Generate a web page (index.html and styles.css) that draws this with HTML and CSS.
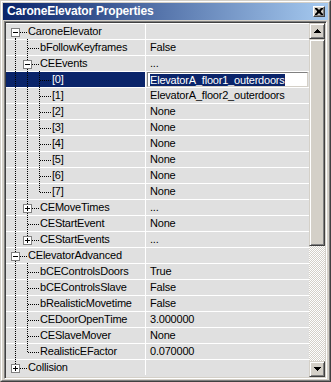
FILE: index.html
```html
<!DOCTYPE html>
<html>
<head>
<meta charset="utf-8">
<link rel="stylesheet" href="styles.css">
</head>
<body>
<div class="window">
  <div class="frame">
    <div class="titlebar">
      <span class="title">CaroneElevator Properties</span>
      <span class="close"><svg width="8" height="7" viewBox="0 0 8 7"><path d="M0 0h2l2 2 2-2h2v1l-2 2v1l2 2v1h-2l-2-2-2 2h-2v-1l2-2v-1l-2-2z" fill="#000"/></svg></span>
    </div>
    <div class="list">
      <div class="rows">
        <div class="row"><div class="name"><span class="g own first"><i class="box minus"></i></span><span class="label">CaroneElevator</span></div><div class="value"></div></div>
        <div class="row"><div class="name"><span class="g pipe"></span><span class="g own tee"></span><span class="label">bFollowKeyframes</span></div><div class="value">False</div></div>
        <div class="row"><div class="name"><span class="g pipe"></span><span class="g own tee"><i class="box minus"></i></span><span class="label">CEEvents</span></div><div class="value">...</div></div>
        <div class="row sel"><div class="name"><span class="g pipe"></span><span class="g pipe"></span><span class="g own tee"></span><span class="label">[0]</span></div><div class="value"><span class="edit"><span class="hl">ElevatorA_floor1_outerdoors</span></span></div></div>
        <div class="row"><div class="name"><span class="g pipe"></span><span class="g pipe"></span><span class="g own tee"></span><span class="label">[1]</span></div><div class="value">ElevatorA_floor2_outerdoors</div></div>
        <div class="row"><div class="name"><span class="g pipe"></span><span class="g pipe"></span><span class="g own tee"></span><span class="label">[2]</span></div><div class="value">None</div></div>
        <div class="row"><div class="name"><span class="g pipe"></span><span class="g pipe"></span><span class="g own tee"></span><span class="label">[3]</span></div><div class="value">None</div></div>
        <div class="row"><div class="name"><span class="g pipe"></span><span class="g pipe"></span><span class="g own tee"></span><span class="label">[4]</span></div><div class="value">None</div></div>
        <div class="row"><div class="name"><span class="g pipe"></span><span class="g pipe"></span><span class="g own tee"></span><span class="label">[5]</span></div><div class="value">None</div></div>
        <div class="row"><div class="name"><span class="g pipe"></span><span class="g pipe"></span><span class="g own tee"></span><span class="label">[6]</span></div><div class="value">None</div></div>
        <div class="row"><div class="name"><span class="g pipe"></span><span class="g pipe"></span><span class="g own elbow"></span><span class="label">[7]</span></div><div class="value">None</div></div>
        <div class="row"><div class="name"><span class="g pipe"></span><span class="g own tee"><i class="box plus"></i></span><span class="label">CEMoveTimes</span></div><div class="value">...</div></div>
        <div class="row"><div class="name"><span class="g pipe"></span><span class="g own tee"></span><span class="label">CEStartEvent</span></div><div class="value">None</div></div>
        <div class="row"><div class="name"><span class="g pipe"></span><span class="g own elbow"><i class="box plus"></i></span><span class="label">CEStartEvents</span></div><div class="value">...</div></div>
        <div class="row"><div class="name"><span class="g own tee"><i class="box minus"></i></span><span class="label">CElevatorAdvanced</span></div><div class="value"></div></div>
        <div class="row"><div class="name"><span class="g pipe"></span><span class="g own tee"></span><span class="label">bCEControlsDoors</span></div><div class="value">True</div></div>
        <div class="row"><div class="name"><span class="g pipe"></span><span class="g own tee"></span><span class="label">bCEControlsSlave</span></div><div class="value">False</div></div>
        <div class="row"><div class="name"><span class="g pipe"></span><span class="g own tee"></span><span class="label">bRealisticMovetime</span></div><div class="value">False</div></div>
        <div class="row"><div class="name"><span class="g pipe"></span><span class="g own tee"></span><span class="label">CEDoorOpenTime</span></div><div class="value">3.000000</div></div>
        <div class="row"><div class="name"><span class="g pipe"></span><span class="g own tee"></span><span class="label">CESlaveMover</span></div><div class="value">None</div></div>
        <div class="row"><div class="name"><span class="g pipe"></span><span class="g own elbow"></span><span class="label">RealisticEFactor</span></div><div class="value">0.070000</div></div>
        <div class="row"><div class="name"><span class="g own elbow"><i class="box plus"></i></span><span class="label">Collision</span></div><div class="value"></div></div>
      </div>
      <div class="scrollbar">
        <div class="sbtn"><svg width="7" height="4" viewBox="0 0 7 4"><path d="M3 0h1v1h1v1h1v1h1v1H0V3h1V2h1V1h1z" fill="#000"/></svg></div>
        <div class="thumb"></div>
        <div class="track"></div>
        <div class="sbtn"><svg width="7" height="4" viewBox="0 0 7 4"><path d="M0 0h7v1H6v1H5v1H4v1H3V3H2V2H1V1H0z" fill="#000"/></svg></div>
      </div>
    </div>
  </div>
</div>
</body>
</html>
```

FILE: styles.css
```css
html, body {
  margin: 0;
  padding: 0;
  background: #d4d0c8;
}

.window {
  width: 331px;
  height: 382px;
  box-sizing: border-box;
  border: 1px solid;
  border-color: #d4d0c8 #404040 #404040 #d4d0c8;
  background: #d4d0c8;
  font-family: "Liberation Sans", Arial, sans-serif;
  font-size: 11px;
  color: #000;
}

.frame {
  height: 100%;
  box-sizing: border-box;
  border: 1px solid;
  border-color: #fff #808080 #808080 #fff;
  padding: 1px;
  display: flex;
  flex-direction: column;
}

.titlebar {
  height: 17px;
  flex: none;
  background: linear-gradient(90deg, #0a246a, #a6caf0);
  display: flex;
  align-items: center;
  justify-content: space-between;
  padding: 0 3px 0 4px;
}

.title {
  color: #fff;
  font-weight: bold;
  font-size: 12px;
  letter-spacing: -0.2px;
  line-height: 17px;
  white-space: nowrap;
}

.close {
  width: 12px;
  height: 11px;
  box-sizing: border-box;
  background: #d4d0c8;
  border: 1px solid;
  border-color: #fff #404040 #404040 #fff;
  box-shadow: inset -1px -1px 0 #808080;
  display: flex;
  align-items: center;
  justify-content: center;
  padding: 0 1px 1px 0;
}

.close svg { display: block; }

.list {
  flex: 1;
  margin: 1px 1px 0 1px;
  border: 1px solid;
  border-color: #808080 #fff #fff #808080;
  padding: 1px;
  box-shadow: inset 1px 1px 0 #404040, inset -1px -1px 0 #d4d0c8;
  display: flex;
  min-height: 0;
}

.rows {
  flex: 1;
  background: #e0e0e0;
  display: flex;
  flex-direction: column;
  overflow: hidden;
}

.row {
  height: 16px;
  flex: none;
  display: flex;
  background: linear-gradient(#fff, #fff) top / 100% 1px no-repeat, #e0e0e0;
  letter-spacing: -0.2px;
  white-space: nowrap;
}

.name {
  width: 140px;
  box-sizing: border-box;
  border-right: 1px solid #fff;
  padding-left: 3px;
  display: flex;
  flex: none;
}

.sel .name {
  background: linear-gradient(#fff, #fff) top / 100% 1px no-repeat, #0a246a;
  color: #fff;
}

.label {
  line-height: 17px;
}

.value {
  flex: 1;
  padding-left: 4px;
  line-height: 17px;
  overflow: hidden;
}

.sel .value {
  padding: 1px 1px 0 1px;
  display: flex;
}

.edit {
  flex: 1;
  height: 15px;
  box-sizing: border-box;
  background: #fff;
  border: 1px solid;
  border-color: #808080 #d4d0c8 #d4d0c8 #808080;
  padding-left: 2px;
  display: flex;
  align-items: center;
}

.hl {
  background: #0a246a;
  color: #fff;
  line-height: 12px;
  height: 12px;
}

.g {
  flex: none;
  width: 12px;
  height: 16px;
  position: relative;
}

.g.own {
  width: 19px;
}

.pipe::before,
.tee::before,
.elbow::before,
.first::before {
  content: "";
  position: absolute;
  left: 6px;
  top: 0;
  width: 1px;
  height: 16px;
  background: repeating-linear-gradient(#000 0 1px, transparent 1px 2px);
}

.elbow::before {
  height: 9px;
}

.first::before {
  top: 9px;
  height: 7px;
}

.own::after {
  content: "";
  position: absolute;
  left: 7px;
  top: 9px;
  width: 11px;
  height: 1px;
  background: repeating-linear-gradient(90deg, #000 0 1px, transparent 1px 2px);
}

.box {
  position: absolute;
  left: 2px;
  top: 5px;
  width: 9px;
  height: 9px;
  box-sizing: border-box;
  border: 1px solid #808080;
  background: #fff;
  z-index: 1;
}

.box::before {
  content: "";
  position: absolute;
  left: 1px;
  top: 3px;
  width: 5px;
  height: 1px;
  background: #000;
}

.box.plus::after {
  content: "";
  position: absolute;
  left: 3px;
  top: 1px;
  width: 1px;
  height: 5px;
  background: #000;
}

.scrollbar {
  width: 16px;
  flex: none;
  display: flex;
  flex-direction: column;
}

.sbtn, .thumb {
  box-sizing: border-box;
  background: #d4d0c8;
  border: 1px solid;
  border-color: #d4d0c8 #404040 #404040 #d4d0c8;
  box-shadow: inset 1px 1px 0 #fff, inset -1px -1px 0 #808080;
}

.sbtn {
  height: 16px;
  flex: none;
  display: flex;
  align-items: center;
  justify-content: center;
}

.sbtn svg { display: block; }

.thumb {
  height: 207px;
  flex: none;
}

.track {
  flex: 1;
  background: repeating-conic-gradient(#fff 0 25%, #d4d0c8 0 50%) 0 0 / 2px 2px;
}
```
